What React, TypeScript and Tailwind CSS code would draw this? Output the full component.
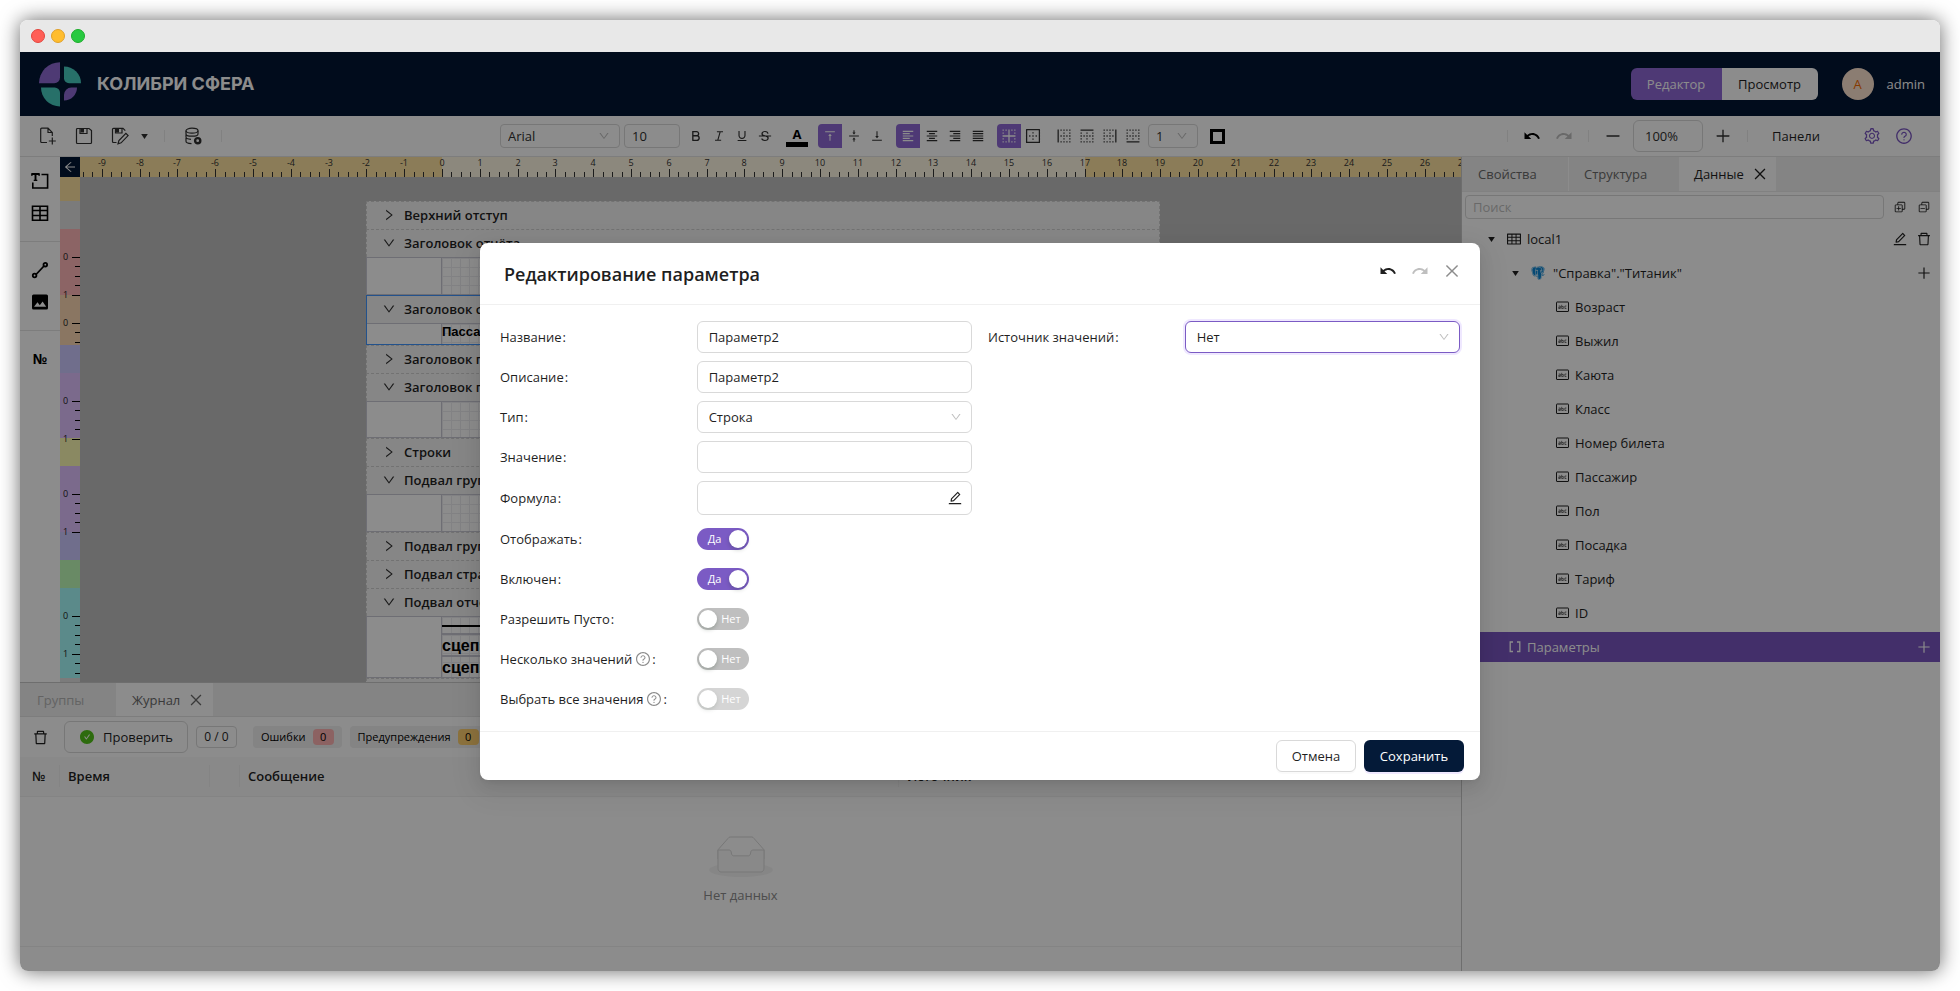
import { type ReactNode, useState } from "react";
import {
  AiFillCheckCircle,
  AiOutlineArrowLeft,
  AiOutlineBold,
  AiOutlineBorderBottom,
  AiOutlineBorderInner,
  AiOutlineBorderLeft,
  AiOutlineBorderOuter,
  AiOutlineBorderRight,
  AiOutlineBorderTop,
  AiOutlineClose,
  AiOutlineDelete,
  AiOutlineDown,
  AiOutlineEdit,
  AiOutlineItalic,
  AiOutlineMinus,
  AiOutlinePlus,
  AiOutlineQuestionCircle,
  AiOutlineRight,
  AiOutlineSetting,
  AiOutlineStrikethrough,
  AiOutlineTable,
  AiOutlineUnderline,
  AiOutlineVerticalAlignBottom,
  AiOutlineVerticalAlignMiddle,
  AiOutlineVerticalAlignTop,
} from "react-icons/ai";
import { BiLogoPostgresql } from "react-icons/bi";
import {
  MdFormatAlignCenter,
  MdFormatAlignJustify,
  MdFormatAlignLeft,
  MdFormatAlignRight,
  MdRedo,
  MdUndo,
} from "react-icons/md";
import { VscCollapseAll, VscExpandAll } from "react-icons/vsc";

function cx(...values: Array<string | false | null | undefined>) {
  return values.filter(Boolean).join(" ");
}

/* ---------- icons ---------- */

function Logo() {
  return (
    <svg viewBox="0 0 126 134" className="h-[45px] w-[42px]" aria-hidden="true">
      <path fill="#8f6bd3" d="M63 0A63 63 0 0 0 0 63H46A17 17 0 0 0 63 46Z" />
      <path fill="#47ccbf" d="M75 13A51 51 0 0 1 126 63H90A15 15 0 0 1 75 48Z" />
      <path fill="#47ccbf" d="M6 76H47A16 16 0 0 1 63 92V133A57 57 0 0 1 6 76Z" />
      <path fill="#8f6bd3" d="M75 115V98A22 22 0 0 1 97 76H114A39 39 0 0 1 75 115Z" />
    </svg>
  );
}

function StrokeIcon({ children, width = 1.4 }: { children: ReactNode; width?: number }) {
  return (
    <svg
      viewBox="0 0 18 18"
      className="size-[18px]"
      fill="none"
      stroke="currentColor"
      strokeWidth={width}
      aria-hidden="true"
    >
      {children}
    </svg>
  );
}

function NewFileIcon() {
  return (
    <StrokeIcon width={1.2}>
      <path d="M8 15.5H2.700a1 1 0 0 1-1-1V2.200a1 1 0 0 1 1-1H9l4.300 4.300V9M9 1.200V5.500h4.300M13.300 10.500v7M9.800 14h7" />
    </StrokeIcon>
  );
}

function SaveIcon() {
  return (
    <StrokeIcon width={1.2}>
      <path d="M2.5 1.5H14l2.500 2v12a1 1 0 0 1-1 1h-13a1 1 0 0 1-1-1v-13a1 1 0 0 1 1-1Z" />
      <path d="M5 1.500h7v5H5Z" />
      <path fill="currentColor" stroke="none" d="M5.500 1.500h3.500v4H5.500Z" />
    </StrokeIcon>
  );
}

function SaveAsIcon() {
  return (
    <StrokeIcon width={1.2}>
      <path d="M5.500 15.500h-3a1 1 0 0 1-1-1V2.300a1 1 0 0 1 1-1H12l2.300 2.400" />
      <path d="M4.500 1.500H11V6H4.500Z" />
      <path fill="currentColor" stroke="none" d="M5 1.500h3V5.500H5Z" />
      <path d="M7 16.800l.9-3.200 7-7.200 2.200 2.200-7 7.200Z" />
    </StrokeIcon>
  );
}

function DatabaseGearIcon() {
  return (
    <StrokeIcon width={1.200}>
      <ellipse cx="8" cy="3.700" rx="6" ry="2.500" />
      <path d="M2 3.700v3.200c0 1.300 2.600 2.300 6 2.300s6-1 6-2.300V3.700M2 7.500v2.600c0 1.200 2 2.100 5 2.300M2 11v3.300c0 1.200 2.400 2.200 5.500 2.400" />
      <circle cx="13.700" cy="13.700" r="2.600" strokeWidth="2.400" />
    </StrokeIcon>
  );
}

function TextBoxIcon() {
  return (
    <StrokeIcon width={1.6}>
      <path d="M10.500 2.500H16.600V16H1.800V10.500" />
      <path strokeWidth="1.900" d="M0.500 2H8.500M4.500 2V8.500" />
      <path strokeWidth="1.200" d="M2.700 8.300H6.300M0.900 1.500V4M8.100 1.500V4" />
    </StrokeIcon>
  );
}

function GridIcon() {
  return (
    <StrokeIcon width={1.6}>
      <path d="M1.500 2.200h15v14h-15ZM1.500 6.500h15M1.500 11.500h15M9 2.500v13.500" />
    </StrokeIcon>
  );
}

function LineIcon() {
  return (
    <StrokeIcon width={1.800}>
      <path d="M5 13.500L13 5" />
      <circle cx="3.600" cy="14.500" r="1.800" />
      <circle cx="14.300" cy="3.700" r="1.800" />
    </StrokeIcon>
  );
}

function PictureIcon() {
  return (
    <svg viewBox="0 0 18 18" className="size-[18px]" aria-hidden="true">
      <rect x="1" y="1.500" width="16" height="15" rx="1.500" fill="currentColor" />
      <path fill="#fff" d="M3 13.800l3.500-4.600 2.300 3 2.800-3.700 3.600 5.300Z" />
    </svg>
  );
}

function FieldIcon() {
  return (
    <svg viewBox="0 0 13 12" className="h-3 w-[13px]" fill="none" stroke="currentColor" aria-hidden="true">
      <rect x="0.500" y="1" width="12" height="9.500" rx="0.500" />
      <path
        strokeWidth="0.600"
        d="M2.700 5h1.600v2.500H2.700V6.300h1.600M5.700 3.800v3.700h1.600V5.500H5.700M10.400 5H8.900v2.500h1.500"
      />
    </svg>
  );
}

function BracketsIcon() {
  return (
    <svg
      viewBox="0 0 12 14"
      className="h-[14px] w-3"
      fill="none"
      stroke="currentColor"
      strokeWidth="1.300"
      aria-hidden="true"
    >
      <path d="M4 2H1.200v9.500H4M8 2h2.800v9.500H8" />
    </svg>
  );
}

function Caret() {
  return (
    <svg viewBox="0 0 8 6" className="h-[5px] w-[7px]" fill="currentColor" aria-hidden="true">
      <path d="M0 0h8L4 6Z" />
    </svg>
  );
}

function EmptyIcon() {
  return (
    <svg viewBox="0 0 64 41" className="h-[41px] w-16" aria-hidden="true">
      <g transform="translate(0 1)" fill="none">
        <ellipse fill="#f5f5f5" cx="32" cy="33" rx="32" ry="7" />
        <g stroke="#d9d9d9">
          <path d="M55 12.760L44.854 1.258C44.367.474 43.656 0 42.907 0H21.093c-.749 0-1.460.474-1.947 1.257L9 12.761V22h46v-9.240z" />
          <path
            fill="#fafafa"
            d="M41.613 15.931c0-1.605.994-2.930 2.227-2.931H55v18.137C55 33.260 53.680 35 52.050 35h-40.100C10.320 35 9 33.259 9 31.137V13h11.160c1.233 0 2.227 1.323 2.227 2.928v.022c0 1.605 1.005 2.901 2.237 2.901h14.752c1.232 0 2.237-1.308 2.237-2.913v-.007z"
          />
        </g>
      </g>
    </svg>
  );
}

/* ---------- small controls ---------- */

function IconButton({
  label,
  children,
  className,
  disabled,
}: {
  label: string;
  children: ReactNode;
  className?: string;
  disabled?: boolean;
}) {
  return (
    <button
      type="button"
      aria-label={label}
      title={label}
      disabled={disabled}
      className={cx("flex shrink-0 items-center justify-center", className)}
    >
      {children}
    </button>
  );
}

function FormatButton({
  label,
  active,
  large,
  children,
}: {
  label: string;
  active?: boolean;
  large?: boolean;
  children: ReactNode;
}) {
  return (
    <IconButton
      label={label}
      className={cx(
        "h-6",
        large ? "text-[18px]" : "text-[14px]",
        active ? "w-6 rounded-l bg-[#8e68d6] text-white" : "w-[23px] text-[#303030]",
      )}
    >
      {children}
    </IconButton>
  );
}

function Divider() {
  return <span className="h-3 w-px shrink-0 bg-[#ebebeb]" />;
}

function SelectBox({
  id,
  label,
  options,
  className,
  wrapperClassName,
}: {
  id?: string;
  label?: string;
  options: string[];
  className?: string;
  wrapperClassName?: string;
}) {
  return (
    <span className={cx("relative flex", wrapperClassName)}>
      <select
        id={id}
        aria-label={label}
        className={cx("w-full appearance-none border bg-white outline-none", className)}
      >
        {options.map((option) => (
          <option key={option}>{option}</option>
        ))}
      </select>
      <AiOutlineDown
        aria-hidden="true"
        className="pointer-events-none absolute right-[10px] top-1/2 size-3 -translate-y-1/2 text-[#bfbfbf]"
      />
    </span>
  );
}

/* ---------- header and toolbar ---------- */

function AppHeader() {
  return (
    <header className="flex h-16 shrink-0 items-center bg-[#021633] pl-[19px] pr-[15px]">
      <Logo />
      <span className="ml-4 font-['Inter',sans-serif] text-[18px] font-bold text-white">КОЛИБРИ СФЕРА</span>
      <div className="ml-auto flex h-8 overflow-hidden rounded-md">
        <button type="button" className="w-[91px] bg-[#8e68d6] text-white">
          Редактор
        </button>
        <button type="button" className="w-[96px] bg-white">
          Просмотр
        </button>
      </div>
      <span className="ml-6 flex size-8 items-center justify-center rounded-full bg-[#fde3cf] text-[#f56a00]">A</span>
      <span className="ml-[13px] text-white">admin</span>
    </header>
  );
}

function Toolbar() {
  return (
    <div className="flex h-[41px] shrink-0 items-center border-b border-[#e4e4e4] bg-white text-[#303030]">
      <div className="flex w-[480px] shrink-0 items-center pl-3">
        <IconButton label="Новый отчёт" className="size-8">
          <NewFileIcon />
        </IconButton>
        <IconButton label="Сохранить отчёт" className="ml-1 size-8">
          <SaveIcon />
        </IconButton>
        <IconButton label="Сохранить как" className="ml-1 size-8">
          <SaveAsIcon />
        </IconButton>
        <IconButton label="Другие варианты сохранения" className="h-8 w-4">
          <Caret />
        </IconButton>
        <span className="ml-3 flex">
          <Divider />
        </span>
        <IconButton label="Источники данных" className="mx-3 size-8">
          <DatabaseGearIcon />
        </IconButton>
        <Divider />
      </div>

      <div className="flex shrink-0 items-center">
        <SelectBox
          label="Шрифт"
          options={["Arial", "Tahoma"]}
          wrapperClassName="w-[120px]"
          className="h-6 rounded border-[#d9d9d9] px-[7px]"
        />
        <input
          aria-label="Размер шрифта"
          defaultValue="10"
          className="ml-1 h-6 w-14 rounded border border-[#d9d9d9] px-[7px] outline-none"
        />
        <div className="ml-1 flex">
          <FormatButton label="Полужирный">
            <AiOutlineBold />
          </FormatButton>
          <FormatButton label="Курсив">
            <AiOutlineItalic />
          </FormatButton>
          <FormatButton label="Подчёркнутый">
            <AiOutlineUnderline />
          </FormatButton>
          <FormatButton label="Зачёркнутый">
            <AiOutlineStrikethrough />
          </FormatButton>
        </div>
        <button type="button" aria-label="Цвет текста" className="mx-[10px] flex w-[22px] flex-col items-center">
          <span className="text-[13px] font-bold leading-4 text-black">A</span>
          <span className="h-[5px] w-full bg-black" />
        </button>
        <div className="flex gap-2">
          <div className="flex">
            <FormatButton label="По верхнему краю" active>
              <AiOutlineVerticalAlignTop />
            </FormatButton>
            <FormatButton label="По середине">
              <AiOutlineVerticalAlignMiddle />
            </FormatButton>
            <FormatButton label="По нижнему краю">
              <AiOutlineVerticalAlignBottom />
            </FormatButton>
          </div>
          <div className="flex">
            <FormatButton label="По левому краю" active>
              <MdFormatAlignLeft />
            </FormatButton>
            <FormatButton label="По центру">
              <MdFormatAlignCenter />
            </FormatButton>
            <FormatButton label="По правому краю">
              <MdFormatAlignRight />
            </FormatButton>
            <FormatButton label="По ширине">
              <MdFormatAlignJustify />
            </FormatButton>
          </div>
          <div className="flex">
            <FormatButton label="Без границ" active large>
              <AiOutlineBorderInner />
            </FormatButton>
            <FormatButton label="Все границы" large>
              <AiOutlineBorderOuter />
            </FormatButton>
          </div>
          <div className="flex">
            <FormatButton label="Левая граница" large>
              <AiOutlineBorderLeft />
            </FormatButton>
            <FormatButton label="Верхняя граница" large>
              <AiOutlineBorderTop />
            </FormatButton>
            <FormatButton label="Правая граница" large>
              <AiOutlineBorderRight />
            </FormatButton>
            <FormatButton label="Нижняя граница" large>
              <AiOutlineBorderBottom />
            </FormatButton>
          </div>
        </div>
        <SelectBox
          label="Толщина границы"
          options={["1", "2", "3"]}
          wrapperClassName="ml-1 w-[50px]"
          className="h-6 rounded border-[#d9d9d9] px-[7px]"
        />
        <button type="button" aria-label="Цвет границы" className="ml-3 size-[15px] border-[3px] border-black" />
      </div>

      <div className="ml-auto flex shrink-0 items-center pr-5">
        <Divider />
        <IconButton label="Отменить" className="ml-2 size-8 text-[18px] text-black">
          <MdUndo />
        </IconButton>
        <IconButton label="Повторить" disabled className="mr-2 size-8 text-[18px] text-[#bfbfbf]">
          <MdRedo />
        </IconButton>
        <Divider />
        <IconButton label="Уменьшить" className="ml-2 size-8 text-[18px]">
          <AiOutlineMinus />
        </IconButton>
        <input
          aria-label="Масштаб"
          defaultValue="100%"
          className="mx-1 h-8 w-[70px] rounded-md border border-[#d9d9d9] px-[11px] outline-none"
        />
        <IconButton label="Увеличить" className="mr-2 size-8 text-[18px]">
          <AiOutlinePlus />
        </IconButton>
        <Divider />
        <button type="button" className="ml-6 w-12 text-left text-[#1f1f1f]">
          Панели
        </button>
        <IconButton label="Настройки" className="ml-9 size-8 text-[18px] text-[#7a56c1]">
          <AiOutlineSetting />
        </IconButton>
        <IconButton label="Справка" className="size-8 text-[18px] text-[#7a56c1]">
          <AiOutlineQuestionCircle />
        </IconButton>
      </div>
    </div>
  );
}

function ToolPalette() {
  return (
    <div className="flex w-10 shrink-0 flex-col items-center bg-white text-black">
      <div className="flex w-full flex-col items-center border-b border-[#e4e4e4] pb-3 pt-2">
        <IconButton label="Текст" className="size-8">
          <TextBoxIcon />
        </IconButton>
        <IconButton label="Таблица" className="size-8">
          <GridIcon />
        </IconButton>
      </div>
      <div className="flex w-full flex-col items-center border-b border-[#e4e4e4] py-3">
        <IconButton label="Линия" className="size-8">
          <LineIcon />
        </IconButton>
        <IconButton label="Изображение" className="size-8">
          <PictureIcon />
        </IconButton>
      </div>
      <button type="button" className="mt-3 size-8 text-[14px] font-bold">
        №
      </button>
    </div>
  );
}

/* ---------- rulers and report page ---------- */

const CM = 37.8;
const ZERO_X = 362;

const quarters = Array.from({ length: 147 }, (_, i) => i - 38);

function HorizontalRuler() {
  return (
    <svg className="h-5 w-full shrink-0" shapeRendering="crispEdges" aria-hidden="true">
      <rect width="100%" height="20" fill="#fde2a0" />
      <rect x={ZERO_X} width={CM * 17} height="20" fill="#fff7e3" />
      {quarters.map((q) => {
        const major = q % 4 === 0;
        const x = Math.round(ZERO_X + (q * CM) / 4);
        return (
          <g key={q}>
            <rect x={x} y={major ? 12 : 15} width="1" height={major ? 8 : 5} fill="#333" />
            {major && (
              <text x={x} y="9" textAnchor="middle" fontSize="9" fill="#333">
                {q / 4}
              </text>
            )}
          </g>
        );
      })}
    </svg>
  );
}

// Each part mirrors one band of the page; ticks run down from the top of its body.
const rulerParts = [
  { top: 0, height: 24, color: "#fde2a0", ticks: 0 },
  { top: 24, height: 28, color: "#e0e0e0", ticks: 0 },
  { top: 52, height: 66, color: "#ffb6b8", ticks: 5 },
  { top: 118, height: 50, color: "#fbd8b2", ticks: 3 },
  { top: 168, height: 28, color: "#ccc8ff", ticks: 0 },
  { top: 196, height: 65, color: "#e1c2ff", ticks: 5 },
  { top: 261, height: 28, color: "#fbf9b2", ticks: 0 },
  { top: 289, height: 66, color: "#e1c2ff", ticks: 5 },
  { top: 355, height: 28, color: "#ccc8ff", ticks: 0 },
  { top: 383, height: 28, color: "#c0fbb9", ticks: 0 },
  { top: 411, height: 90, color: "#a7fbfb", ticks: 7 },
];

function VerticalRuler() {
  return (
    <svg className="min-h-0 w-5 flex-1 bg-[#e0e0e0]" shapeRendering="crispEdges" aria-hidden="true">
      {rulerParts.map((part) => (
        <rect key={part.top} y={part.top} width="20" height={part.height} fill={part.color} />
      ))}
      {rulerParts.map((part) =>
        Array.from({ length: part.ticks }, (_, t) => {
          const major = t % 4 === 0;
          const y = Math.round(part.top + 28 + (t * CM) / 4);
          return (
            <g key={`${part.top}-${t}`}>
              <rect x={major ? 12 : 15} y={y} width={major ? 8 : 5} height="1" fill="#000" />
              {major && (
                <text x="3" y={y + 3} fontSize="9" fill="#222">
                  {t / 4}
                </text>
              )}
            </g>
          );
        }),
      )}
    </svg>
  );
}

function Band({
  title,
  children,
  selected,
  bodyClassName,
}: {
  title: string;
  children?: ReactNode;
  selected?: boolean;
  bodyClassName?: string;
}) {
  const open = bodyClassName !== undefined;
  const Arrow = open ? AiOutlineDown : AiOutlineRight;
  return (
    <section className={cx("shrink-0", selected && "outline outline-1 -outline-offset-1 outline-[#4096ff]")}>
      <h3 className="flex h-7 items-center border border-b-0 border-dashed border-[#d0d0d0] bg-[#f5f5f5] pb-0.5 pl-[15px]">
        <Arrow aria-hidden="true" className="size-[14px] text-[#303030]" />
        <span className="ml-2 text-[13px] font-semibold">{title}</span>
      </h3>
      {open && (
        <div className={cx("flex border border-[#c9c9d4] bg-white", bodyClassName)}>
          <div className="w-[75px] shrink-0 border-r border-[#c9c9d4]" />
          <div className="min-w-0 flex-1 bg-[linear-gradient(to_right,#ededf1_1px,transparent_1px),linear-gradient(to_bottom,#ededf1_1px,transparent_1px)] bg-[size:9px_9px] font-['Liberation_Sans',sans-serif] font-bold text-black">
            {children}
          </div>
        </div>
      )}
    </section>
  );
}

function ReportPage() {
  return (
    <div className="relative min-h-0 flex-1 overflow-hidden bg-[#c0c0c0]">
      <div className="absolute left-[286px] top-6 flex w-[794px] flex-col bg-[#f5f5f5]">
        <Band title="Верхний отступ" />
        <Band title="Заголовок отчёта" bodyClassName="h-[38px]" />
        <Band title="Заголовок страницы" selected bodyClassName="h-[22px]">
          <p className="text-[13px] leading-4">Пассажиры</p>
        </Band>
        <Band title="Заголовок группы" />
        <Band title="Заголовок группы" bodyClassName="h-[37px]" />
        <Band title="Строки" />
        <Band title="Подвал группы" bodyClassName="h-[38px]" />
        <Band title="Подвал группы" />
        <Band title="Подвал страницы" />
        <Band title="Подвал отчёта" bodyClassName="h-[62px]">
          <div className="h-[18px] border-b-2 border-[#c9c9d4] pt-2">
            <div className="h-0.5 bg-black" />
          </div>
          <p className="h-[22px] border-b-2 border-[#c9c9d4] text-[16px] leading-[22px]">сцепить</p>
          <p className="text-[16px] leading-[22px]">сцепить</p>
        </Band>
        <div className="h-7 border border-dashed border-[#d0d0d0]" />
      </div>
    </div>
  );
}

/* ---------- bottom panel ---------- */

function Counter({ label, value, className }: { label: string; value: number; className: string }) {
  return (
    <button
      type="button"
      className="flex h-[22px] items-center gap-[7px] rounded bg-[#f0f0f0] px-2 text-[11px] text-black"
    >
      {label}
      <span className={cx("flex h-4 w-[21px] items-center justify-center rounded", className)}>{value}</span>
    </button>
  );
}

const journalColumns = [
  { title: "№", className: "w-10 pl-3" },
  { title: "Время", className: "w-[150px] pl-2" },
  { title: "", className: "w-[30px]" },
  { title: "Сообщение", className: "w-[659px] pl-2" },
  { title: "Источник", className: "pl-2" },
];

function JournalPanel() {
  return (
    <section className="flex h-[289px] shrink-0 flex-col border-t border-[#c8c8c8] bg-white">
      <div className="flex h-[34px] shrink-0 border-b border-[#e4e4e4] bg-[#f0f0f0]">
        <button type="button" className="w-24 pl-[17px] text-left text-[#b5b5b5]">
          Группы
        </button>
        <button type="button" className="flex w-[97px] items-center gap-2 bg-white pl-4 text-[#6a6a6a]">
          Журнал
          <AiOutlineClose aria-hidden="true" className="size-4" />
        </button>
      </div>
      <div className="flex h-10 shrink-0 items-center pl-2">
        <IconButton label="Очистить" className="size-6 text-[17px]">
          <AiOutlineDelete />
        </IconButton>
        <button
          type="button"
          className="ml-3 flex h-8 w-[124px] items-center justify-center gap-2 rounded-md border border-[#d9d9d9]"
        >
          <AiFillCheckCircle aria-hidden="true" className="size-4 text-[#52c41a]" />
          Проверить
        </button>
        <span className="ml-2 flex h-[22px] w-[41px] items-center justify-center rounded border border-[#d9d9d9] text-[12px]">
          0 / 0
        </span>
        <div className="ml-4 flex gap-2">
          <Counter label="Ошибки" value={0} className="bg-[#ffb3b3]" />
          <Counter label="Предупреждения" value={0} className="bg-[#ffcf70]" />
        </div>
      </div>
      <table className="w-full table-fixed text-left">
        <thead>
          <tr className="h-[39px] border-b border-[#f0f0f0] bg-[#fafafa]">
            {journalColumns.map((column, index) => (
              <th key={index} scope="col" className={cx("p-0 font-semibold", column.className)}>
                <span
                  className={cx(
                    "flex h-[22px] items-center",
                    index < journalColumns.length - 1 && "border-r border-[#f0f0f0]",
                  )}
                >
                  {column.title}
                </span>
              </th>
            ))}
          </tr>
        </thead>
      </table>
      <div className="flex flex-1 flex-col items-center gap-2 border-b border-[#f0f0f0] pt-[39px] text-[#8c8c8c]">
        <EmptyIcon />
        Нет данных
      </div>
      <div className="h-6 shrink-0" />
    </section>
  );
}

/* ---------- data panel ---------- */

const fields = ["Возраст", "Выжил", "Каюта", "Класс", "Номер билета", "Пассажир", "Пол", "Посадка", "Тариф", "ID"];

function DataPanel() {
  return (
    <aside className="flex w-[479px] shrink-0 flex-col border-l border-[#c8c8c8] bg-white">
      <div className="flex h-[35px] shrink-0 border-b border-[#ebebeb] bg-[#f0f0f0] text-[#6a6a6a]">
        <button type="button" className="w-[107px] border-r border-white pl-4 text-left">
          Свойства
        </button>
        <button type="button" className="w-[110px] pl-[15px] text-left">
          Структура
        </button>
        <button type="button" className="flex w-[97px] items-center gap-2 bg-white pl-[15px] text-[#1f1f1f]">
          Данные
          <AiOutlineClose aria-hidden="true" className="size-4" />
        </button>
      </div>
      <div className="flex h-[30px] shrink-0 items-center pl-[3px] pr-1">
        <input
          type="search"
          aria-label="Поиск"
          placeholder="Поиск"
          className="h-6 min-w-0 flex-1 rounded border border-[#d9d9d9] px-[7px] outline-none placeholder:text-[#bfbfbf]"
        />
        <IconButton label="Развернуть всё" className="ml-1 size-6 text-[14px]">
          <VscExpandAll />
        </IconButton>
        <IconButton label="Свернуть всё" className="size-6 text-[14px]">
          <VscCollapseAll />
        </IconButton>
      </div>
      <ul>
        <li className="flex h-[34px] items-center pl-[26px] pr-1">
          <Caret />
          <AiOutlineTable aria-hidden="true" className="ml-[11px] size-4" />
          <span className="ml-[5px] flex-1">local1</span>
          <IconButton label="Изменить" className="size-6 text-[16px]">
            <AiOutlineEdit />
          </IconButton>
          <IconButton label="Удалить" className="size-6 text-[16px]">
            <AiOutlineDelete />
          </IconButton>
        </li>
        <li className="flex h-[34px] items-center pl-[50px] pr-1">
          <Caret />
          <BiLogoPostgresql aria-hidden="true" className="ml-[11px] size-4 text-[#0b86d3]" />
          <span className="ml-[7px] flex-1">"Справка"."Титаник"</span>
          <IconButton label="Добавить поле" className="size-6 text-[16px]">
            <AiOutlinePlus />
          </IconButton>
        </li>
        {fields.map((field) => (
          <li key={field} className="flex h-[34px] items-center gap-[6px] pl-[94px]">
            <FieldIcon />
            {field}
          </li>
        ))}
        <li className="my-0.5 flex h-[30px] items-center bg-[#7a56c1] pl-[47px] pr-1 text-white">
          <BracketsIcon />
          <span className="ml-[6px] flex-1">Параметры</span>
          <IconButton label="Добавить параметр" className="size-6 text-[16px]">
            <AiOutlinePlus />
          </IconButton>
        </li>
      </ul>
    </aside>
  );
}

/* ---------- parameter dialog ---------- */

const inputClass = "h-8 w-full rounded-md border border-[#d9d9d9] bg-white px-[11px] outline-none";

function FormRow({ id, label, help, children }: { id: string; label: string; help?: boolean; children: ReactNode }) {
  return (
    <div className="grid grid-cols-[10fr_14fr] items-center">
      <label htmlFor={id} className="flex items-center">
        {label}
        {help && <AiOutlineQuestionCircle aria-hidden="true" className="ml-[3px] size-4 text-[#8c8c8c]" />}
        <span className="ml-px">:</span>
      </label>
      <div className="flex min-h-8 items-center">{children}</div>
    </div>
  );
}

function Toggle({ id, initial = false, disabled }: { id: string; initial?: boolean; disabled?: boolean }) {
  const [checked, setChecked] = useState(initial);
  return (
    <span className={cx("relative flex h-[22px] w-[52px] items-center", disabled && "opacity-65")}>
      <input
        id={id}
        type="checkbox"
        role="switch"
        checked={checked}
        disabled={disabled}
        onChange={(event) => setChecked(event.target.checked)}
        className="h-full w-full appearance-none rounded-full bg-[#bfbfbf] checked:bg-[#7b5bc4]"
      />
      <span
        className={cx(
          "pointer-events-none absolute size-[18px] rounded-full bg-white shadow-[0_2px_4px_rgba(0,35,11,0.2)]",
          checked ? "right-0.5" : "left-0.5",
        )}
      />
      <span
        className={cx(
          "pointer-events-none absolute text-[11px] font-medium text-white",
          checked ? "left-[11px]" : "right-2",
        )}
      >
        {checked ? "Да" : "Нет"}
      </span>
    </span>
  );
}

function ParameterDialog() {
  return (
    <div
      role="dialog"
      aria-modal="true"
      aria-labelledby="dialog-title"
      className="w-[1000px] max-w-full rounded-lg bg-white shadow-[0_6px_16px_rgba(0,0,0,0.08),0_3px_6px_-4px_rgba(0,0,0,0.12),0_9px_28px_8px_rgba(0,0,0,0.05)]"
    >
      <div className="flex h-[62px] items-center border-b border-[#f0f0f0] pl-6 pr-3">
        <h2 id="dialog-title" className="flex-1 text-[18px] font-semibold">
          Редактирование параметра
        </h2>
        <div className="flex pb-[5px]">
          <IconButton label="Отменить изменение" className="size-8 text-[18px] text-[#1f1f1f]">
            <MdUndo />
          </IconButton>
          <IconButton label="Повторить изменение" disabled className="size-8 text-[18px] text-[#bfbfbf]">
            <MdRedo />
          </IconButton>
          <IconButton label="Закрыть" className="size-8 text-[18px] text-[#8c8c8c]">
            <AiOutlineClose />
          </IconButton>
        </div>
      </div>

      <form className="grid grid-cols-2 gap-x-4 px-5 py-4">
        <div className="flex flex-col gap-2">
          <FormRow id="name" label="Название">
            <input id="name" defaultValue="Параметр2" className={inputClass} />
          </FormRow>
          <FormRow id="description" label="Описание">
            <input id="description" defaultValue="Параметр2" className={inputClass} />
          </FormRow>
          <FormRow id="type" label="Тип">
            <SelectBox
              id="type"
              options={["Строка", "Число", "Дата"]}
              wrapperClassName="w-full"
              className="h-8 rounded-md border-[#d9d9d9] px-[11px]"
            />
          </FormRow>
          <FormRow id="value" label="Значение">
            <input id="value" className={inputClass} />
          </FormRow>
          <FormRow id="formula" label="Формула">
            <div className="flex h-[34px] w-full items-center rounded-md border border-[#d9d9d9] pr-1">
              <input id="formula" className="min-w-0 flex-1 px-[11px] outline-none" />
              <IconButton label="Изменить формулу" className="size-6 text-[16px]">
                <AiOutlineEdit />
              </IconButton>
            </div>
          </FormRow>
          <FormRow id="visible" label="Отображать">
            <Toggle id="visible" initial />
          </FormRow>
          <FormRow id="enabled" label="Включен">
            <Toggle id="enabled" initial />
          </FormRow>
          <FormRow id="nullable" label="Разрешить Пусто">
            <Toggle id="nullable" />
          </FormRow>
          <FormRow id="multiple" label="Несколько значений" help>
            <Toggle id="multiple" />
          </FormRow>
          <FormRow id="select-all" label="Выбрать все значения" help>
            <Toggle id="select-all" disabled />
          </FormRow>
        </div>
        <div>
          <FormRow id="source" label="Источник значений">
            <SelectBox
              id="source"
              options={["Нет", "Список", "Запрос"]}
              wrapperClassName="w-full"
              className="h-8 rounded-md border-[#7b5bc4] px-[11px] shadow-[0_0_0_2px_#efe8ff]"
            />
          </FormRow>
        </div>
      </form>

      <div className="flex justify-end gap-2 border-t border-[#f0f0f0] px-4 py-2">
        <button
          type="button"
          className="h-8 w-20 rounded-md border border-[#d9d9d9] bg-white shadow-[0_2px_0_rgba(0,0,0,0.02)]"
        >
          Отмена
        </button>
        <button
          type="button"
          className="h-8 w-[100px] rounded-md bg-[#041a38] font-medium text-white shadow-[0_2px_0_#efe8ff]"
        >
          Сохранить
        </button>
      </div>
    </div>
  );
}

export default function App() {
  return (
    <div className="h-screen bg-white p-5 font-['Open_Sans','Noto_Sans',sans-serif] text-[13px] leading-5 text-[#1f1f1f]">
      <div className="flex h-full flex-col overflow-hidden rounded-lg shadow-[0_0_20px_rgba(0,0,0,0.6)]">
        <div className="flex h-8 shrink-0 items-center gap-[6px] bg-[#e8e8e8] pl-[11px]">
          <span className="size-[14px] rounded-full border border-[#e2463f] bg-[#ff5f57]" />
          <span className="size-[14px] rounded-full border border-[#e0a02a] bg-[#ffbd2e]" />
          <span className="size-[14px] rounded-full border border-[#1dad2b] bg-[#28c940]" />
        </div>

        <div className="relative flex min-h-0 flex-1 flex-col">
          <AppHeader />
          <Toolbar />
          <div className="flex min-h-0 flex-1">
            <main className="flex min-w-0 flex-1 flex-col">
              <div className="flex min-h-0 flex-1">
                <ToolPalette />
                <div className="flex w-5 shrink-0 flex-col">
                  <IconButton label="Свернуть панель" className="size-5 bg-[#021633] text-[14px] text-white">
                    <AiOutlineArrowLeft />
                  </IconButton>
                  <VerticalRuler />
                </div>
                <div className="flex min-w-0 flex-1 flex-col">
                  <HorizontalRuler />
                  <ReportPage />
                </div>
              </div>
              <JournalPanel />
            </main>
            <DataPanel />
          </div>

          <div className="absolute inset-0 flex items-center justify-center bg-black/45">
            <ParameterDialog />
          </div>
        </div>
      </div>
    </div>
  );
}
